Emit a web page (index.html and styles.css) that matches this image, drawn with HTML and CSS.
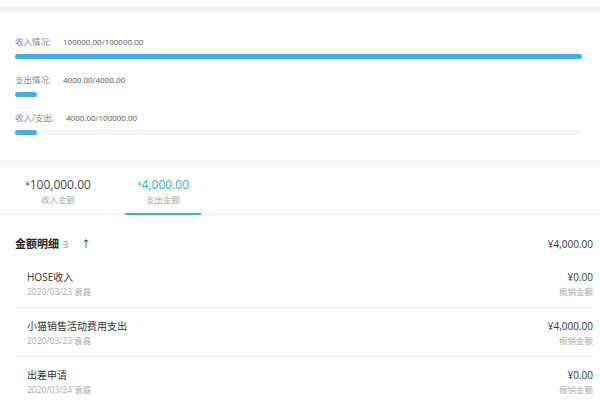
FILE: index.html
```html
<!DOCTYPE html>
<html lang="zh-CN">
<head>
    <meta charset="UTF-8">
    <meta name="viewport" content="width=device-width, initial-scale=1.0">
    <title>金额明细</title>
    <link rel="stylesheet" href="styles.css">
</head>
<body>
    <div class="band band-top"></div>

    <!-- 预算情况 -->
    <div class="summary">
        <div class="row">
            <div class="row-text"><span class="row-label">收入情况:</span><span class="row-value">100000.00/100000.00</span></div>
            <div class="bar no-track"><div class="fill" style="width: 100%;"></div></div>
        </div>
        <div class="row">
            <div class="row-text"><span class="row-label">支出情况:</span><span class="row-value">4000.00/4000.00</span></div>
            <div class="bar no-track"><div class="fill" style="width: 22px;"></div></div>
        </div>
        <div class="row">
            <div class="row-text"><span class="row-label">收入/支出:</span><span class="row-value">4000.00/100000.00</span></div>
            <div class="bar"><div class="fill" style="width: 22px;"></div></div>
        </div>
    </div>

    <div class="band"></div>

    <!-- 收支切换 -->
    <div class="tabs">
        <div class="tab">
            <div class="tab-amount"><span class="yen">¥</span>100,000.00</div>
            <div class="tab-label">收入金额</div>
        </div>
        <div class="tab active">
            <div class="tab-amount"><span class="yen">¥</span>4,000.00</div>
            <div class="tab-label">支出金额</div>
        </div>
    </div>

    <!-- 明细列表 -->
    <div class="detail">
        <div class="detail-head">
            <div class="detail-title">金额明细<span class="count">·3</span><span class="sort">↑</span></div>
            <div class="detail-total">¥4,000.00</div>
        </div>
        <ul class="list">
            <li class="item">
                <div>
                    <div class="item-name">HOSE收入</div>
                    <div class="item-meta">2020/03/23 袁磊</div>
                </div>
                <div class="item-right">
                    <div class="item-amount">¥0.00</div>
                    <div class="item-meta">报销金额</div>
                </div>
            </li>
            <li class="item">
                <div>
                    <div class="item-name">小猫销售活动费用支出</div>
                    <div class="item-meta">2020/03/23 袁磊</div>
                </div>
                <div class="item-right">
                    <div class="item-amount">¥4,000.00</div>
                    <div class="item-meta">报销金额</div>
                </div>
            </li>
            <li class="item">
                <div>
                    <div class="item-name">出差申请</div>
                    <div class="item-meta">2020/03/24 袁磊</div>
                </div>
                <div class="item-right">
                    <div class="item-amount">¥0.00</div>
                    <div class="item-meta">报销金额</div>
                </div>
            </li>
        </ul>
    </div>
</body>
</html>
```

FILE: styles.css
```css
body {
    margin: 0;
    background: #fff;
    font-family: "Open Sans", "Noto Sans CJK SC", sans-serif;
    color: #333;
    overflow: hidden;
}
.band {
    height: 6px;
    background: #f3f3f4;
}
.band-top {
    margin-top: 6px;
}
.summary {
    padding: 23px 18px 25px 15px;
}
.row {
    margin-bottom: 14px;
}
.row:last-child {
    margin-bottom: 0;
}
.row-text {
    height: 14px;
    line-height: 14px;
    font-size: 8.5px;
    margin-bottom: 5px;
}
.row-label {
    color: #888;
    display: inline-block;
    width: 48px;
}
.row-value {
    color: #555;
    font-size: 8px;
}
.row:last-child .row-label {
    width: 51px;
}
.bar {
    height: 5px;
    border-radius: 3px;
    background: #f5f5f6;
}
.bar.no-track {
    background: transparent;
}
.fill {
    height: 100%;
    border-radius: 3px;
    background: #46ace4;
}
.tabs {
    display: flex;
    gap: 29px;
    padding: 12px 0 0 20px;
    height: 36px;
    border-bottom: 1px solid #ededed;
}
.tab {
    width: 76px;
    text-align: center;
    position: relative;
}
.tab-amount {
    height: 14px;
    line-height: 14px;
    font-size: 12px;
    color: #444;
}
.yen {
    font-size: 8px;
    vertical-align: top;
    line-height: 10px;
}
.tab-label {
    margin-top: 2px;
    height: 12px;
    line-height: 12px;
    font-size: 8.5px;
    color: #aaa;
}
.tab.active .tab-amount {
    color: #2fb3b4;
}
.tab.active::after {
    content: "";
    position: absolute;
    left: 0;
    right: 0;
    bottom: -1px;
    height: 2px;
    background: #3bb4b6;
}
.detail {
    padding: 21px 7px 0 15px;
}
.detail-head {
    display: flex;
    justify-content: space-between;
    align-items: center;
    height: 16px;
    margin-bottom: 7px;
}
.detail-title {
    font-size: 11px;
    font-weight: bold;
    color: #222;
    line-height: 16px;
}
.count {
    font-size: 8.5px;
    font-weight: normal;
    color: #888;
    margin-left: 2px;
}
.sort {
    font-size: 10px;
    font-weight: normal;
    color: #333;
    margin-left: 13px;
}
.detail-total {
    font-size: 10px;
    color: #333;
    line-height: 16px;
}
.list {
    list-style: none;
    margin: 0;
    padding: 0;
}
.item {
    display: flex;
    justify-content: space-between;
    padding: 11px 0 9px 12px;
    border-bottom: 1px solid #ededed;
}
.item-name {
    font-size: 10px;
    line-height: 14px;
    height: 14px;
    color: #333;
    margin-bottom: 2px;
}
.item-meta {
    font-size: 8.5px;
    line-height: 12px;
    height: 12px;
    color: #aaa;
}
.item-right {
    text-align: right;
}
.item-amount {
    font-size: 10px;
    line-height: 14px;
    height: 14px;
    color: #333;
    margin-bottom: 2px;
}
```
